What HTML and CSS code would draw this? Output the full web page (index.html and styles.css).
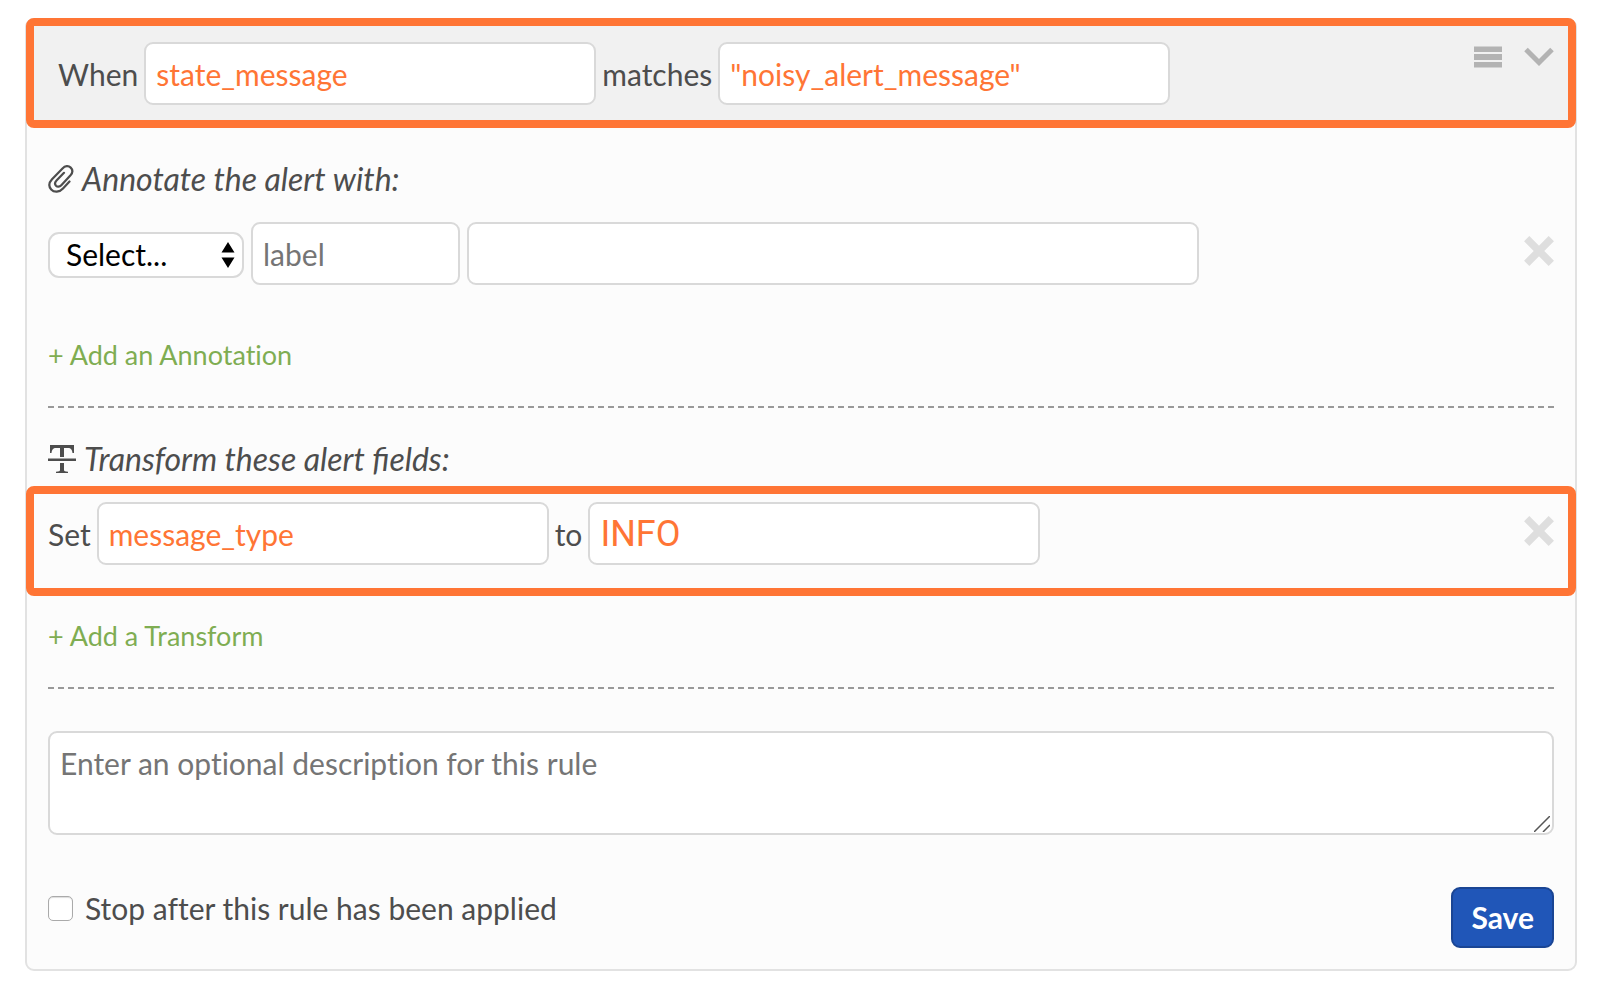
FILE: index.html
```html
<!DOCTYPE html>
<html lang="en">
<head>
    <meta charset="UTF-8">
    <meta name="viewport" content="width=device-width, initial-scale=1.0">
    <title>Alert Rule</title>
    <link rel="stylesheet" href="styles.css">
</head>
<body>
    <form class="rule">
        <!-- Matching condition -->
        <div class="row rule-header highlight">
            <label for="matchField">When</label>
            <input type="text" class="field value" id="matchField" value="state_message">
            <label for="matchValue">matches</label>
            <input type="text" class="field value" id="matchValue" value="&quot;noisy_alert_message&quot;">
            <div class="rule-tools">
                <button type="button" class="icon-btn" aria-label="Reorder">
                    <svg width="28" height="22" viewBox="0 0 28 22" fill="currentColor"><path d="M0 .5h28v5.500H0zM0 8h28v6H0zM0 16h28v5.500H0z"/></svg>
                </button>
                <button type="button" class="icon-btn" aria-label="Collapse">
                    <svg width="30" height="20" viewBox="0 0 30 20" fill="none" stroke="currentColor" stroke-width="5"><path d="M2 2.5L15 15.5L28 2.5"/></svg>
                </button>
            </div>
        </div>

        <!-- Annotations -->
        <section class="rule-section">
            <h2>
                <svg width="26" height="28" viewBox="0 0 26 28" fill="none" stroke="currentColor" stroke-width="2.2" stroke-linecap="round" stroke-linejoin="round"><path d="M21.5 16.5L15 23.5C11.5 27.5 6 27.5 3.2 24.4C.6 21.5 1 17.6 4 14.3L14.5 3.4C17 .7 20.6.5 22.7 2.6C24.9 4.8 24.6 8 22.3 10.6L13.3 20.2C11.5 22.1 9.3 22.1 8 20.8C6.7 19.4 6.8 17.4 8.5 15.6L16 7.8"/></svg>
                Annotate the alert with:
            </h2>
            <div class="row annotation">
                <div class="select-wrap">
                    <select aria-label="Annotation type">
                        <option>Select...</option>
                        <option>URL</option>
                        <option>Note</option>
                        <option>Image</option>
                    </select>
                    <svg class="select-arrows" width="14" height="26" viewBox="0 0 14 26"><path d="M7 0l6.500 10.500H.5zM7 26L.5 15.500h13z"/></svg>
                </div>
                <input type="text" class="field label-field" placeholder="label" aria-label="Annotation label">
                <input type="text" class="field content-field" aria-label="Annotation content">
                <button type="button" class="icon-btn remove" aria-label="Remove annotation">
                    <svg width="30" height="30" viewBox="0 0 30 30" fill="none" stroke="currentColor" stroke-width="7.500"><path d="M2.700 2.700L27.300 27.300M27.300 2.700L2.700 27.300"/></svg>
                </button>
            </div>
            <a class="add-link" href="#">+ Add an Annotation</a>
        </section>

        <!-- Transforms -->
        <section class="rule-section">
            <h2>
                <svg width="28" height="28" viewBox="0 0 28 28" fill="currentColor"><path d="M2 0H26V8H24.500C24 4.500 23 3 20 3H16V12H12V3H8C5 3 4 4.500 3.500 8H2zM0 13.500H28V16H0zM12 18H16V25C16 26.300 17 26.500 20 26.700V28H8V26.700C11 26.500 12 26.300 12 25z"/></svg>
                Transform these alert fields:
            </h2>
            <div class="row transform highlight">
                <label for="setField">Set</label>
                <input type="text" class="field value" id="setField" value="message_type">
                <label for="setValue">to</label>
                <input type="text" class="field value value-large" id="setValue" value="INFO">
                <button type="button" class="icon-btn remove" aria-label="Remove transform">
                    <svg width="30" height="30" viewBox="0 0 30 30" fill="none" stroke="currentColor" stroke-width="7.500"><path d="M2.700 2.700L27.300 27.300M27.300 2.700L2.700 27.300"/></svg>
                </button>
            </div>
            <a class="add-link" href="#">+ Add a Transform</a>
        </section>

        <!-- Description and save -->
        <div class="rule-description">
            <textarea placeholder="Enter an optional description for this rule" aria-label="Description"></textarea>
            <svg class="grip" width="16" height="16" viewBox="0 0 16 16" fill="none" stroke="currentColor" stroke-width="1.500"><path d="M0 16L16 0M9 16L16 9"/></svg>
        </div>
        <div class="rule-footer">
            <label class="stop">
                <input type="checkbox">
                Stop after this rule has been applied
            </label>
            <button type="submit" class="save-btn">Save</button>
        </div>
    </form>
</body>
</html>
```

FILE: styles.css
```css
:root {
    --clr-highlight: #ff7535;
    --clr-text: #4d4d4d;
    --clr-border: #d9d9d9;
    --clr-link: #7fad52;
    --clr-save: #2056b8;
    --radius: 9px;
}
*,*::before,*::after{box-sizing:border-box;}
body{
    margin:0;
    padding:18px 23px 21px 25px;
    background:#fff;
    color:var(--clr-text);
    font-family:Lato,sans-serif;
    font-size:30px;
    line-height:36px;
    font-variant-ligatures:none;
}
input,select,textarea,button{font:inherit;font-variant-ligatures:none;color:inherit;margin:0;}
svg{display:block;flex:none;}

.rule{
    background:#fcfcfc;
    border:2px solid #e2e2e2;
    border-radius:var(--radius);
}
.row{display:flex;align-items:center;gap:6px;}
.highlight{border:8px solid var(--clr-highlight);border-radius:8px;}

/* ------ Fields ------ */
.field{
    flex:0 1 452px;
    min-width:0;
    height:63px;
    padding:0 10px;
    background:#fff;
    border:2px solid var(--clr-border);
    border-radius:var(--radius);
}
.value{color:var(--clr-highlight);}
.value-large{font-family:Roboto,sans-serif;font-size:36px;}
::placeholder{color:#757575;opacity:1;}
.label-field{flex-basis:209px;}
.content-field{flex-basis:732px;}

.select-wrap{position:relative;flex:0 0 196px;}
select{
    appearance:none;
    width:100%;
    height:46px;
    padding:0 40px 2px 16px;
    background:#fff;
    border:2px solid var(--clr-border);
    border-radius:11px;
    color:#000;
}
.select-arrows{position:absolute;right:9px;top:10px;pointer-events:none;}

/* ------ Buttons ------ */
.icon-btn{
    display:flex;
    align-items:center;
    height:30px;
    padding:0;
    border:none;
    background:none;
    color:#b3b3b3;
    cursor:pointer;
}
.remove{height:58px;margin-left:auto;align-self:flex-start;color:#dedede;}
.save-btn{
    height:61px;
    padding:0 18px 2px;
    border:2px solid #1a4594;
    border-radius:var(--radius);
    background:var(--clr-save);
    color:#fff;
    font-weight:700;
    cursor:pointer;
}

/* ------ Sections ------ */
.rule-header{margin:-2px -1px 0;padding:16px 14px 15px 24px;background:#f1f1f1;}
.rule-tools{display:flex;gap:22px;margin-left:auto;align-self:flex-start;}
.rule-section{
    margin:0 21px;
    padding:33px 0 34px;
    border-bottom:2px dashed #999;
}
h2{
    display:flex;
    align-items:center;
    gap:8px;
    margin:0;
    font-size:32px;
    font-weight:400;
    font-style:italic;
    font-variant-ligatures:normal;
}
.annotation{gap:7px;margin:25px 0 53px;align-items:baseline;}
.transform{margin:9px -22px 23px;padding:8px 14px 23px;}
.add-link{
    display:block;
    width:fit-content;
    color:var(--clr-link);
    font-size:27px;
    line-height:34px;
    text-decoration:none;
}

/* ------ Description and footer ------ */
.rule-description{position:relative;margin:42px 21px 52px;}
textarea{
    display:block;
    width:100%;
    height:104px;
    padding:12px 10px;
    background:#fff;
    border:2px solid var(--clr-border);
    border-radius:var(--radius);
    resize:none;
}
.grip{position:absolute;right:4px;bottom:3px;color:#555;}
.rule-footer{
    display:flex;
    align-items:flex-start;
    justify-content:space-between;
    margin:0 21px 21px;
}
.stop{display:flex;align-items:center;gap:12px;padding-top:3px;}
.stop input{
    appearance:none;
    width:25px;
    height:25px;
    background:#fff;
    border:1px solid #aaa;
    border-radius:5px;
    box-shadow:inset 0 1px 1px #ddd;
}
```
